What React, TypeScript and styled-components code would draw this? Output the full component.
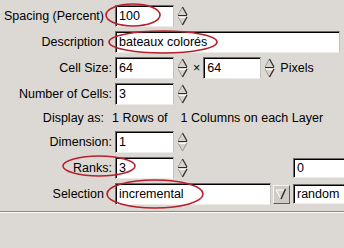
import styled, { createGlobalStyle } from 'styled-components';

const GlobalStyle = createGlobalStyle`
	html, body {
		margin: 0;
		padding: 0;
		background: #dcd9d4;
	}
	body {
		font-family: 'Liberation Sans', Arial, sans-serif;
		font-size: 12.5px;
		color: #000;
		overflow: hidden;
	}
`;

const SpinArrows = ({ downOff }: { downOff?: boolean }) => {
	const dark = '#2f2e2c';
	const off = '#a9a6a1';
	return (
		<SpinBox>
			<svg width='11' height='22' viewBox='0 0 11 22'>
				<polygon points='5.5,2 10,10 1,10' fill='#d6d3ce' />
				<line x1='1' y1='10' x2='5.5' y2='2' stroke='#9c9995' />
				<line x1='5.5' y1='2' x2='10' y2='10' stroke={dark} strokeWidth='1.2' />
				<line x1='1' y1='10.5' x2='10' y2='10.5' stroke={dark} />
				<polygon points='1,12 10,12 5.5,20' fill='#d6d3ce' />
				<line x1='1' y1='12.5' x2='10' y2='12.5' stroke='#ffffff' />
				<line x1='1' y1='12' x2='5.5' y2='20' stroke='#9c9995' />
				<line x1='10' y1='12' x2='5.5' y2='20' stroke={downOff ? off : dark} strokeWidth='1.4' />
			</svg>
		</SpinBox>
	);
};

const App = () => {
	return (
		<>
			<GlobalStyle />
			<Page>
				<Row>
					<Label $pad={8}>Spacing (Percent)</Label>
					<Entry $w={59}>100</Entry>
					<SpinArrows />
				</Row>
				<Row>
					<Label $pad={8}>Description</Label>
					<Entry $w={225}>bateaux colorés</Entry>
				</Row>
				<Row>
					<Label>Cell Size:</Label>
					<Entry $w={59}>64</Entry>
					<SpinArrows />
					<Times>×</Times>
					<Entry $w={58}>64</Entry>
					<SpinArrows />
					<Unit>Pixels</Unit>
				</Row>
				<Row>
					<Label>Number of Cells:</Label>
					<Entry $w={59}>3</Entry>
					<SpinArrows />
				</Row>
				<Row $h={22}>
					<DisplayLabel>Display as:</DisplayLabel>
					<DisplayText>1 Rows of</DisplayText>
					<DisplayText $gap={13}>1 Columns on each Layer</DisplayText>
				</Row>
				<Row>
					<Label>Dimension:</Label>
					<Entry $w={59}>1</Entry>
					<SpinArrows downOff />
				</Row>
				<Row>
					<Label>Ranks:</Label>
					<Entry $w={59}>3</Entry>
					<SpinArrows />
					<SideEntry $left={105}>0</SideEntry>
				</Row>
				<Row>
					<Label $pad={8}>Selection</Label>
					<Entry $w={156}>incremental</Entry>
					<ComboButton>
						<svg width='13' height='12' viewBox='0 0 13 12'>
							<polygon points='1,2 10,2 5.5,10' fill='#d6d3ce' />
							<line x1='1' y1='2' x2='10' y2='2' stroke='#ffffff' />
							<line x1='1' y1='2' x2='5.5' y2='10' stroke='#ffffff' />
							<line x1='10.5' y1='1' x2='6' y2='11' stroke='#2f2e2c' strokeWidth='1.5' />
						</svg>
					</ComboButton>
					<SideEntry $left={3}>random</SideEntry>
				</Row>
				<Separator />
				<Marks width='344' height='248' viewBox='0 0 344 248'>
					<ellipse cx='133' cy='15' rx='27' ry='11' />
					<ellipse cx='163' cy='42' rx='54' ry='11' />
					<ellipse cx='99' cy='166' rx='36' ry='10' />
					<ellipse cx='155' cy='194' rx='48' ry='14' />
				</Marks>
			</Page>
		</>
	);
};

export default App;

const Page = styled.div`
	position: relative;
	width: 344px;
	height: 248px;
	padding-top: 3px;
	box-sizing: border-box;
	overflow: hidden;
`;

const Row = styled.div<{ $h?: number }>`
	display: flex;
	align-items: center;
	height: ${(p) => p.$h ?? 26}px;
	white-space: nowrap;
`;

const Label = styled.div<{ $pad?: number }>`
	width: 112px;
	flex-shrink: 0;
	box-sizing: border-box;
	padding-right: ${(p) => p.$pad ?? 0}px;
	text-align: right;
	margin-right: 3px;
`;

const DisplayLabel = styled.div`
	width: 104px;
	flex-shrink: 0;
	text-align: right;
	margin-right: 8px;
`;

const DisplayText = styled.span<{ $gap?: number }>`
	margin-left: ${(p) => p.$gap ?? 0}px;
`;

const Entry = styled.div<{ $w: number }>`
	width: ${(p) => p.$w}px;
	height: 22px;
	flex-shrink: 0;
	box-sizing: border-box;
	background: #fff;
	border-top: 1px solid #6e6c68;
	border-left: 1px solid #6e6c68;
	border-right: 1px solid #c4c1bc;
	border-bottom: 1px solid #eeece8;
	box-shadow: inset 1px 1px 0 #000;
	padding: 0 0 0 3px;
	display: flex;
	align-items: center;
	overflow: hidden;
`;

const SideEntry = styled(Entry).attrs({ $w: 60 })<{ $left: number }>`
	height: 20px;
	margin-left: ${(p) => p.$left}px;
`;

const SpinBox = styled.div`
	width: 11px;
	height: 22px;
	margin-left: 3px;
	flex-shrink: 0;
	display: flex;
`;

const Times = styled.span`
	margin: 0 3px 0 5px;
`;

const Unit = styled.span`
	margin-left: 5px;
`;

const ComboButton = styled.div`
	width: 17px;
	height: 19px;
	margin-left: 2px;
	flex-shrink: 0;
	box-sizing: border-box;
	background: #cfccc7;
	border-top: 1px solid #f4f3f0;
	border-left: 1px solid #f4f3f0;
	border-right: 1px solid #5e5c58;
	border-bottom: 1px solid #5e5c58;
	display: flex;
	align-items: center;
	justify-content: center;
`;

const Separator = styled.div`
	margin-top: 4px;
	border-top: 1px solid #8c8a86;
	border-bottom: 1px solid #fbfaf8;
`;

const Marks = styled.svg`
	position: absolute;
	top: 0;
	left: 0;
	pointer-events: none;

	ellipse {
		fill: none;
		stroke: #b8202c;
		stroke-width: 1.6;
	}
`;
